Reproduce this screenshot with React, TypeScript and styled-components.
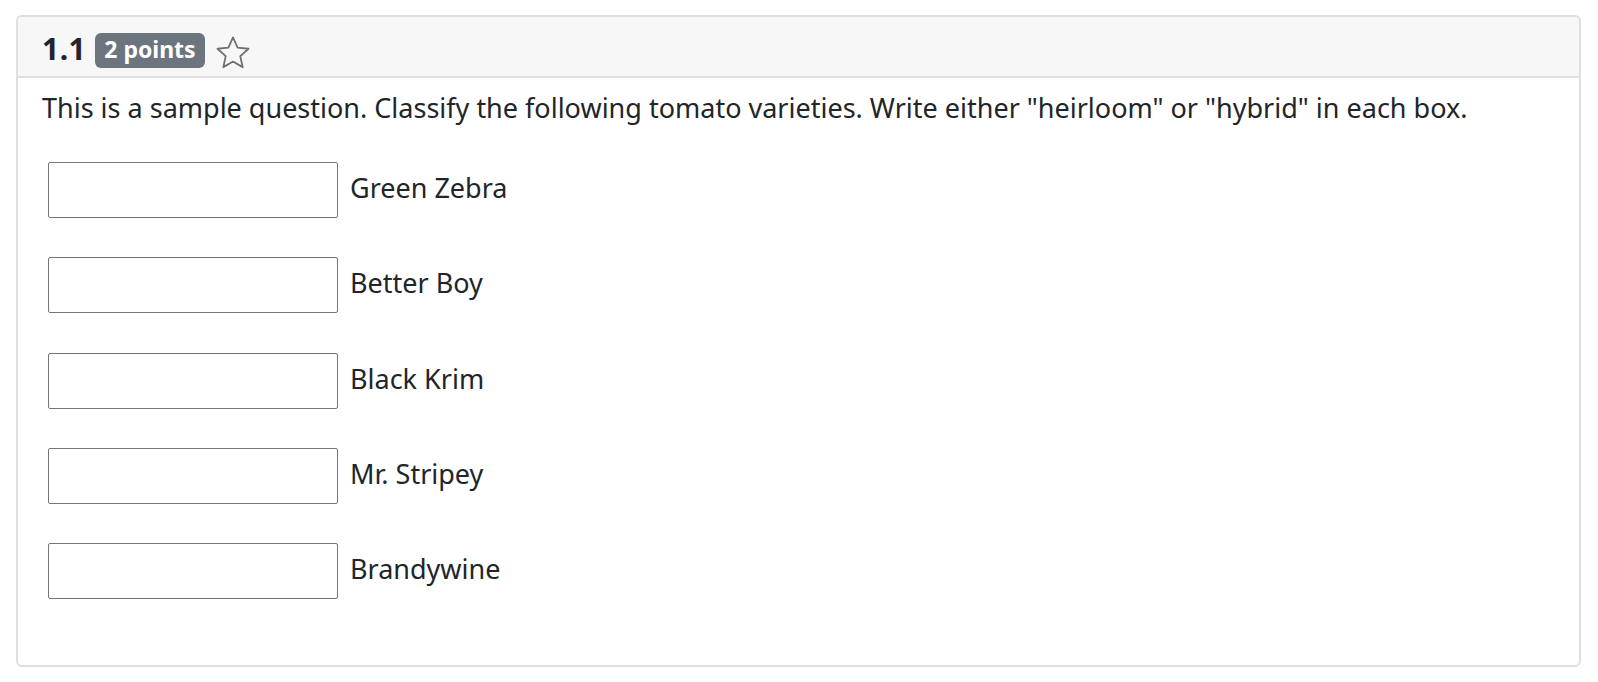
import React from "react";
import styled, { createGlobalStyle } from "styled-components";

const Global = createGlobalStyle`
  html, body { margin: 0; padding: 0; background: #fff; }
  body { font-family: "Noto Sans", "Open Sans", sans-serif; color: #212529; }
  * { box-sizing: border-box; }
`;

const Page = styled.div`
  padding: 15px 17px 0 16px;
`;

const Card = styled.section`
  width: 1565px;
  height: 652px;
  border: 2px solid #dfdfdf;
  border-radius: 6px;
  overflow: hidden;
  display: flex;
  flex-direction: column;
`;

const Header = styled.header`
  height: 61px;
  background: #f7f7f7;
  border-bottom: 2px solid #dfdfdf;
  display: flex;
  align-items: center;
  padding: 4px 0 0 24px;
  gap: 9px;
`;

const Number = styled.span`
  font-size: 30px;
  font-weight: 700;
  color: #212529;
  letter-spacing: 0.5px;
`;

const Badge = styled.span`
  background: #6c757d;
  color: #fff;
  font-size: 23px;
  font-weight: 700;
  border-radius: 6px;
  height: 35px;
  padding: 0 9px 2px;
  margin-top: 3px;
  display: inline-flex;
  align-items: center;
`;

const StarIcon = styled.svg`
  width: 40px;
  height: 38px;
  margin-left: -1px;
  margin-top: 8px;
`;

const Body = styled.div`
  padding: 12px 24px 0 24px;
`;

const Prompt = styled.p`
  margin: 0 0 36px 0;
  font-size: 27px;
  line-height: 36px;
`;

const Rows = styled.div`
  display: flex;
  flex-direction: column;
  gap: 39.25px;
  padding-left: 6px;
`;

const Row = styled.label`
  display: flex;
  align-items: center;
  gap: 12px;
`;

const Box = styled.input`
  width: 290px;
  height: 56px;
  border: 1px solid #767676;
  border-radius: 2px;
  background: #fff;
  font-size: 24px;
  padding: 0 8px;
  outline: none;
`;

const Label = styled.span`
  font-size: 27px;
  color: #212529;
  margin-top: -5px;
`;

const varieties = ["Green Zebra", "Better Boy", "Black Krim", "Mr. Stripey", "Brandywine"];

export default function App() {
  return (
    <>
      <Global />
      <Page>
        <Card>
          <Header>
            <Number>1.1</Number>
            <Badge>2 points</Badge>
            <StarIcon viewBox="0 0 24 24" fill="none" stroke="#707070" strokeWidth="1.15" strokeLinejoin="round">
              <path d="M12 2.2 L14.9 8.6 L21.8 9.3 L16.6 14 L18.1 20.9 L12 17.4 L5.9 20.9 L7.4 14 L2.2 9.3 L9.1 8.6 Z" />
            </StarIcon>
          </Header>
          <Body>
            <Prompt>
              This is a sample question. Classify the following tomato varieties. Write either "heirloom" or "hybrid" in each box.
            </Prompt>
            <Rows>
              {varieties.map((v) => (
                <Row key={v}>
                  <Box type="text" />
                  <Label>{v}</Label>
                </Row>
              ))}
            </Rows>
          </Body>
        </Card>
      </Page>
    </>
  );
}
